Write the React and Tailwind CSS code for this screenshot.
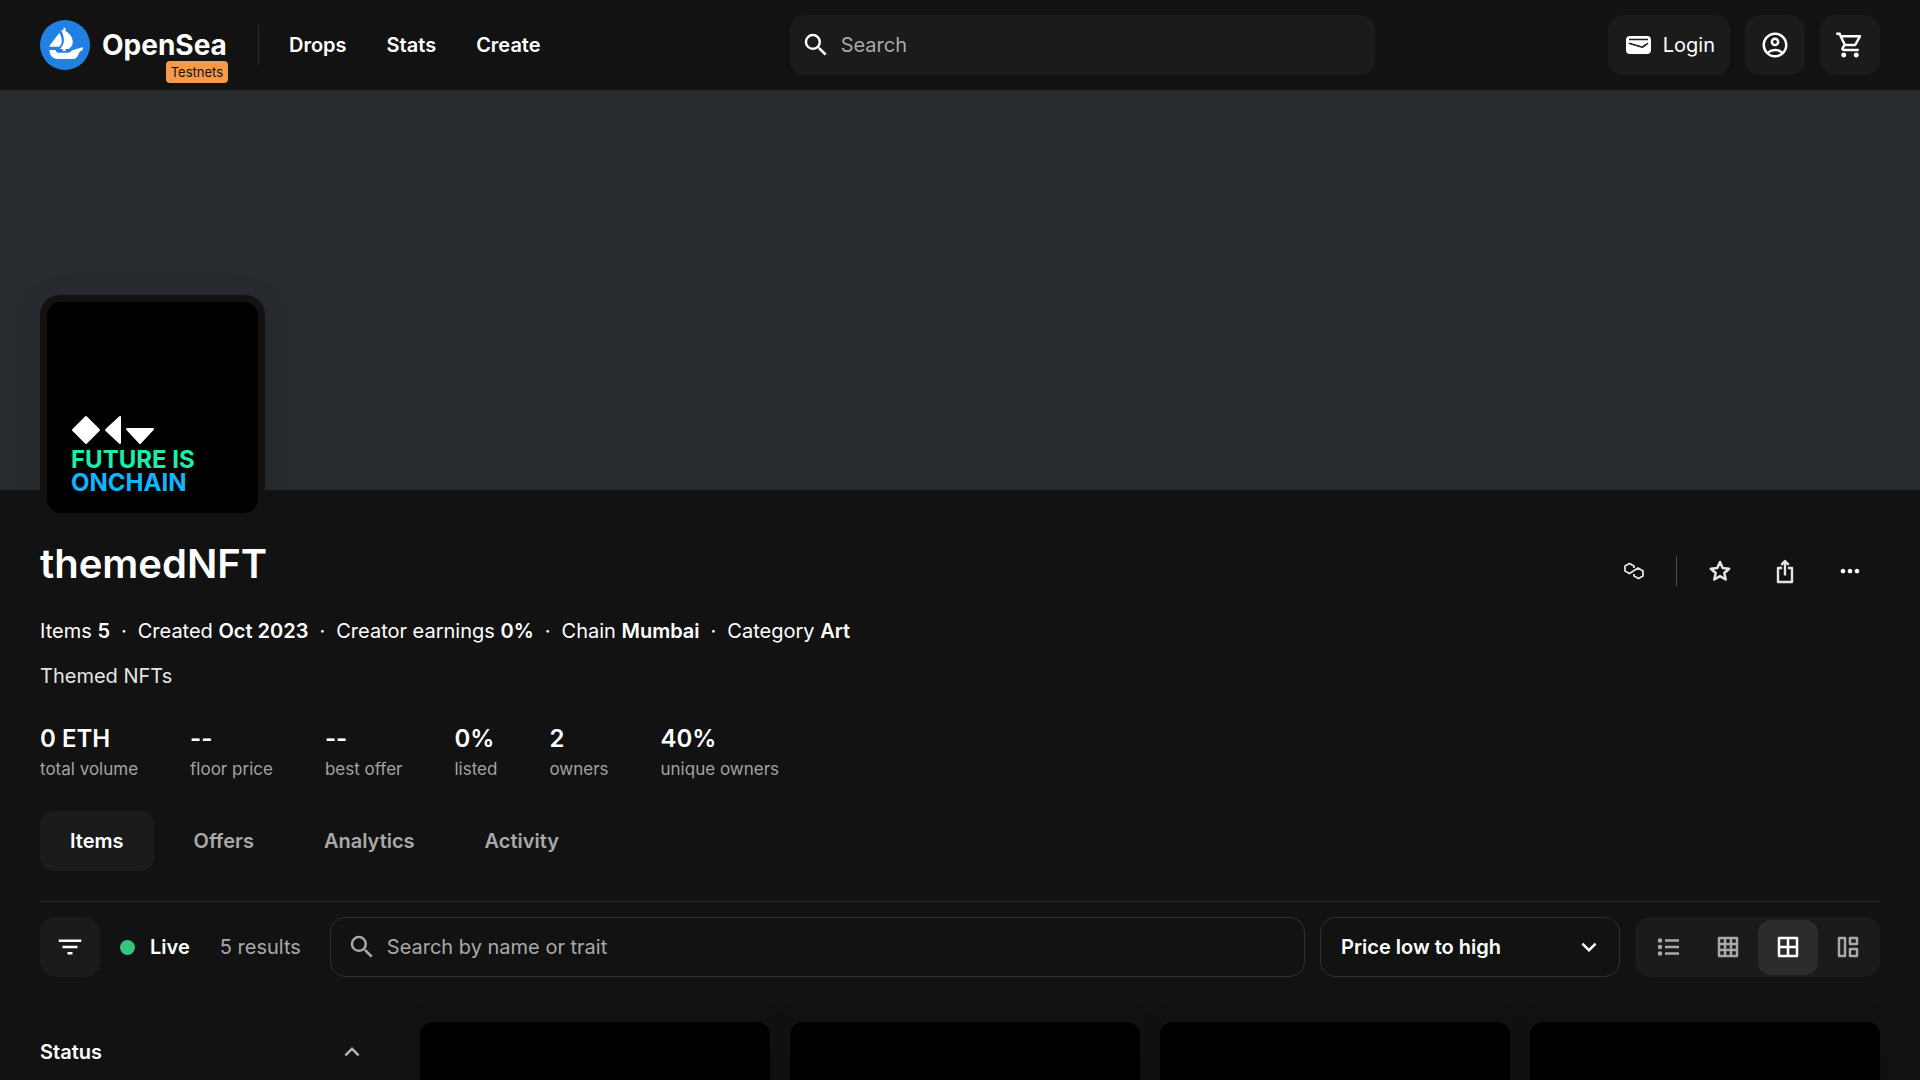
import {
  MdSearch, MdOutlineAccountCircle, MdOutlineShoppingCart, MdFilterList, MdMoreHoriz,
  MdExpandMore, MdExpandLess,
} from "react-icons/md";

const meta = [
  ["Items", "5"],
  ["Created", "Oct 2023"],
  ["Creator earnings", "0%"],
  ["Chain", "Mumbai"],
  ["Category", "Art"],
];

const stats = [
  ["0 ETH", "total volume"],
  ["--", "floor price"],
  ["--", "best offer"],
  ["0%", "listed"],
  ["2", "owners"],
  ["40%", "unique owners"],
];

const views = [
  { label: "List view", lines: "M8 4.500h14M8 11h14M8 17.500h14", dots: "M3 4.500h.01M3 11h.01M3 17.500h.01" },
  { label: "Small grid", lines: "M2 2h18v18H2zM8 2v18M14 2v18M2 8h18M2 14h18" },
  { label: "Large grid", lines: "M2 2h18v18H2zM11 2v18M2 11h18" },
  { label: "Mosaic", lines: "M2 2h6v18H2zM13 2h7v6h-7zM13 13h7v7h-7z" },
];

function ViewIcon({ lines, dots }) {
  return (
    <svg viewBox="0 0 22 22" className="size-[22px]" fill="none" stroke="currentColor" strokeWidth="2.5" strokeLinejoin="round" aria-hidden="true">
      <path d={lines} />
      {dots && <path d={dots} strokeWidth="4.500" strokeLinecap="round" />}
    </svg>
  );
}

function ShipLogo() {
  return (
    <svg viewBox="0 0 90 90" className="size-[50px]" aria-hidden="true">
      <circle cx="45" cy="45" r="45" fill="#2081E2" />
      <g fill="#fff">
        <path d="M35 23c3 6 5 13 4 18-1 3-2 5-4 7H18c-1 0-1-1-.5-2z" />
        <path d="M38 18l4 1v-3c0-3 4-3 4 0v4c7 4 13 11 13 20 0 5-3 9-7 12h-6v4h-5v-4h-5c4-4 7-9 7-15 0-7-2-13-5-19z" />
        <path d="M17 54h11c1 4 3 5 6 5h16c3 0 5-1 7-4l19-6c1 0 1 0 1 1v4c-5 2-6 4-8 8-2 4-4 8-9 8H32c-9 0-15-6-15-16z" />
      </g>
    </svg>
  );
}

function WalletIcon() {
  return (
    <svg viewBox="0 0 30 30" className="size-[30px]" aria-hidden="true">
      <rect x="3" y="6" width="25" height="18" rx="4" fill="#fff" />
      <path d="M6 9.500h19" stroke="#1b1b1b" strokeWidth="1.500" />
      <path d="M6 13l12 3.500c1 .4 1.500 0 2-.5l5-3v.5l-4.500 3.500c-.5.500-1 .6-2 .3L6 13.600z" fill="#1b1b1b" stroke="#1b1b1b" />
    </svg>
  );
}

function PolygonIcon() {
  return (
    <svg viewBox="0 0 20 18" className="h-[18px] w-5" fill="none" stroke="#e5e5e5" strokeWidth="1.8" strokeLinejoin="round" aria-hidden="true">
      <path d="M10 6V4L5.500 1.500 1 4v5l4.500 2.500L14 6l5 3v5l-4.500 2.500L10 14v-2" />
    </svg>
  );
}

function StarIcon() {
  return (
    <svg viewBox="0 0 24 24" className="size-6" fill="none" stroke="#e5e5e5" strokeWidth="2.500" strokeLinejoin="round" aria-hidden="true">
      <path d="M12 3l2.700 6 6.500.7-4.900 4.300 1.400 6.500L12 17.200l-5.700 3.300 1.400-6.500-4.900-4.300L9.300 9z" />
    </svg>
  );
}

function ShareIcon() {
  return (
    <svg viewBox="0 0 24 26" className="h-[26px] w-6" fill="none" stroke="#e5e5e5" strokeWidth="2.400" strokeLinejoin="round" aria-hidden="true">
      <path d="M9 10H5v14h14V10h-4M12 17.500V4M8.300 6.800L12 3l3.700 3.800" />
    </svg>
  );
}

function CollectionArt() {
  return (
    <div className="flex h-full flex-col justify-end rounded-[14px] bg-black pb-[19px] pl-6 text-2xl leading-[23px] font-bold">
      <svg viewBox="0 0 84 30" className="mb-[3px] h-[30px] w-[84px] fill-white stroke-white" strokeWidth="2" strokeLinejoin="round" aria-hidden="true">
        <path d="M15 2l13 13-13 13L2 15zM49 2v26L35 15zM56 14h26L69 28z" />
      </svg>
      <span className="text-[#1aeea8]">FUTURE IS</span>
      <span className="text-[#12b5fb]">ONCHAIN</span>
    </div>
  );
}

function Header() {
  const button = "flex h-[60px] min-w-[60px] items-center justify-center gap-2.5 rounded-[15px] bg-[#1b1b1b] px-[15px]";
  return (
    <header className="flex items-center justify-between gap-6 bg-[#121212] px-10 py-[15px]">
      <div className="flex items-center pr-4">
        <a href="#" className="relative flex items-center gap-3">
          <ShipLogo />
          <span className="w-[126px] text-[28px] leading-8 font-bold">OpenSea</span>
          <span className="absolute right-0 -bottom-[13px] rounded bg-[#f5994a] px-[5px] text-[13px] leading-[22px] text-[#121212]">Testnets</span>
        </a>
        <span className="ml-[30px] h-10 w-px bg-[#2b2b2b]" />
        <nav className="ml-[30px] flex gap-10 font-semibold">
          <a href="#">Drops</a>
          <a href="#">Stats</a>
          <a href="#">Create</a>
        </nav>
      </div>
      <label className="flex h-[60px] min-w-0 basis-[585px] items-center gap-2.5 rounded-[15px] bg-[#1b1b1b] px-[11px]">
        <MdSearch className="size-[30px] shrink-0" />
        <input type="search" aria-label="Search" placeholder="Search" className="w-full bg-transparent outline-none placeholder:text-[#a9a9a9]" />
      </label>
      <div className="flex gap-[15px]">
        <button className={button}><WalletIcon />Login</button>
        <button className={button} aria-label="Account"><MdOutlineAccountCircle className="size-[30px]" /></button>
        <button className={button} aria-label="Cart"><MdOutlineShoppingCart className="size-[30px]" /></button>
      </div>
    </header>
  );
}

export default function App() {
  const action = "flex h-[60px] w-[65px] items-center justify-center";
  return (
    <div className="h-screen overflow-hidden bg-[#121212] font-['Inter',sans-serif] text-xl text-white">
      <Header />
      <div className="h-[400px] bg-[#272b2f]" />
      <main className="px-10">
        <div className="relative -mt-[195px] size-[225px] rounded-[20px] bg-[#121212] p-[7px] shadow-[0_5px_30px_rgba(0,0,0,0.1)]">
          <CollectionArt />
        </div>
        <div className="flex items-center justify-between pt-[7px]">
          <h1 className="text-[40px] leading-[52px] font-semibold">themedNFT</h1>
          <div className="-mr-[2px] flex items-center pt-3.5">
            <button className={action} aria-label="Polygon"><PolygonIcon /></button>
            <span className="mx-[10px] h-[30px] w-px bg-[#4c505c]" />
            <button className={action} aria-label="Favorite"><StarIcon /></button>
            <button className={action} aria-label="Share"><ShareIcon /></button>
            <button className={action} aria-label="More"><MdMoreHoriz className="size-7" /></button>
          </div>
        </div>
        <div className="flex pt-[15px] leading-[30px]">
          {meta.map(([label, value], i) => (
            <span key={label} className="whitespace-pre">
              {i > 0 && <span className="px-[11px]">·</span>}
              {label} <b className="font-semibold">{value}</b>
            </span>
          ))}
        </div>
        <p className="pt-[15px] leading-[30px] text-[#e5e5e5]">Themed NFTs</p>
        <dl className="flex gap-[52px] pt-[33px]">
          {stats.map(([value, label]) => (
            <div key={label} className="flex flex-col-reverse">
              <dt className="text-[17px] leading-[30px] text-[#a3a3a3]">{label}</dt>
              <dd className="text-2xl leading-[30px] font-semibold">{value}</dd>
            </div>
          ))}
        </dl>
        <nav className="flex gap-2.5 pt-[27px] font-semibold text-[#a9a9a9]">
          <a href="#" aria-current="page" className="rounded-[13px] bg-[#1b1b1b] px-[30px] py-[15px] leading-[30px] text-white">Items</a>
          <a href="#" className="px-[30px] py-[15px] leading-[30px]">Offers</a>
          <a href="#" className="px-[30px] py-[15px] leading-[30px]">Analytics</a>
          <a href="#" className="px-[30px] py-[15px] leading-[30px]">Activity</a>
        </nav>
        <div className="mt-[30px] flex h-[76px] items-end border-t border-[#2a2a2a]">
          <button aria-label="Filter" className="flex size-[60px] items-center justify-center rounded-[15px] bg-[#1b1b1b]"><MdFilterList className="size-[30px]" /></button>
          <div className="ml-5 flex h-[60px] items-center">
            <span className="size-[15px] rounded-full bg-[#34c77b]" />
            <span className="ml-[15px] font-semibold">Live</span>
            <span className="ml-[30px] text-[#a9a9a9]">5 results</span>
          </div>
          <label className="ml-[29px] flex h-[60px] flex-1 items-center gap-2.5 rounded-[15px] border border-[#303030] px-4">
            <MdSearch className="size-[30px] shrink-0 text-[#a9a9a9]" />
            <input aria-label="Search by name or trait" placeholder="Search by name or trait" className="w-full bg-transparent outline-none placeholder:text-[#a9a9a9]" />
          </label>
          <div className="relative ml-[15px] w-[300px]">
            <select aria-label="Sort by" className="h-[60px] w-full appearance-none rounded-[15px] border border-[#303030] bg-[#121212] px-5 font-semibold">
              <option>Price low to high</option>
            </select>
            <MdExpandMore className="pointer-events-none absolute top-[15px] right-4 size-[30px]" />
          </div>
          <div className="ml-[15px] flex h-[60px] items-center rounded-[15px] bg-[#1b1b1b] pr-[2px] pl-[3px]">
            {views.map(({ label, lines, dots }, i) => (
              <button
                key={label}
                aria-label={label}
                aria-pressed={i === 2}
                className={`flex h-[55px] w-[60px] items-center justify-center rounded-[13px] ${i === 2 ? "bg-[#2c2c2c]" : "text-[#a9a9a9]"}`}
              >
                <ViewIcon lines={lines} dots={dots} />
              </button>
            ))}
          </div>
        </div>
        <div className="flex items-start pt-[45px]">
          <button className="mr-[50px] flex h-[60px] w-[330px] items-center justify-between pr-[3px] font-semibold">
            Status
            <MdExpandLess className="size-[30px] text-[#b5b5b5]" />
          </button>
          <div className="grid flex-1 grid-cols-4 gap-5">
            {[1, 2, 3, 4].map((n) => (
              <article key={n} className="h-[350px] rounded-[13px] bg-black shadow-[0_5px_30px_rgba(0,0,0,0.15)]" />
            ))}
          </div>
        </div>
      </main>
    </div>
  );
}
